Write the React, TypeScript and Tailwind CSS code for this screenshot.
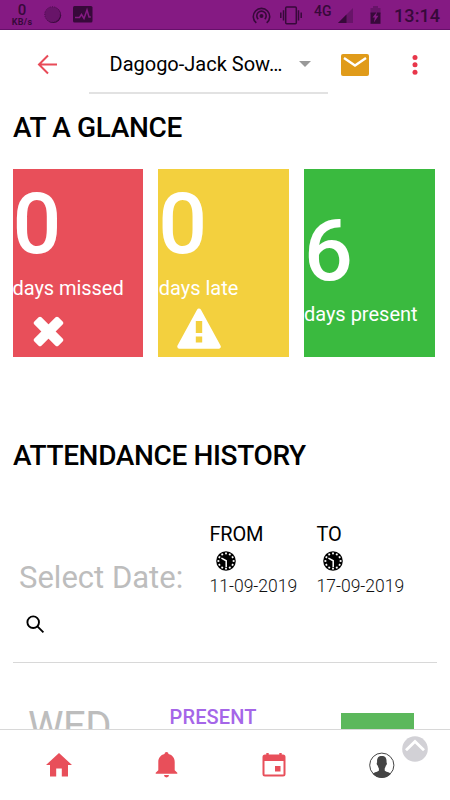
import React from "react";

const DIAL_HOURS = [0, 30, 60, 90, 120, 150, 180, 210, 240, 270, 300, 330];

function StatusBar() {
  return (
    <div className="flex h-[30px] shrink-0 items-center border-b border-[#66106a] bg-[#851a83] text-[#37093a]">
      <div className="ml-[11px] flex w-[22px] flex-col items-center">
        <span className="text-[15px] font-medium leading-[15px]">0</span>
        <span className="text-[9px] font-bold leading-[9px] tracking-[0.3px]">KB/s</span>
      </div>
      <svg className="ml-[11px]" width="18" height="18" viewBox="0 0 18 18">
        <circle cx="9.3" cy="9.3" r="7.8" fill="#37093a" />
        <circle cx="8.5" cy="8.5" r="7.8" fill="#681469" stroke="#4c0e4e" strokeWidth="1" strokeDasharray="1 1.4" />
      </svg>
      <svg className="ml-[11px]" width="20" height="17" viewBox="0 0 20 17">
        <rect width="19.5" height="16.5" rx="1.5" fill="#37093a" />
        <path d="M2 11.500h4.500l2-3 2.500 4L14 4l2 7h1.800" fill="none" stroke="#851a83" strokeWidth="1.5" />
      </svg>
      <svg className="ml-[159px] mt-[1px]" width="19" height="19" viewBox="0 0 19 19" fill="none" stroke="#37093a" strokeWidth="1.6">
        <path d="M4.3 16.9a8.2 8.2 0 1 1 10.4 0" />
        <path d="M6.2 13.2a4.700 4.700 0 1 1 6.600 0" />
        <circle cx="9.5" cy="10" r="1.2" fill="#37093a" />
      </svg>
      <svg className="ml-[9px] mt-[1px]" width="22" height="19" viewBox="0 0 22 19" fill="none" stroke="#37093a" strokeWidth="1.5">
        <rect x="5.7" y="1" width="10.6" height="16.8" rx="1" />
        <path d="M3.5 4.3v10.2M18.5 4.3v10.2M.8 6.500v5.500M21.200 6.500v5.500" />
      </svg>
      <span className="mb-[7px] ml-[12px] w-[18px] text-[14px] font-medium leading-[14px]">4G</span>
      <svg className="ml-[6px] mt-[3px]" width="16" height="16" viewBox="0 0 16 16">
        <path d="M0 15L15 0v15z" fill="#681469" />
        <path d="M0 15L8.5 6.500V15z" fill="#37093a" />
      </svg>
      <svg className="ml-[16px] mt-[1px]" width="11" height="19" viewBox="0 0 11 19">
        <path d="M3 0h5v2h2.500v6H.5V2H3z" fill="#681469" />
        <path d="M.5 6.500h10v11.300H.5z" fill="#37093a" />
        <path d="M7.300 5.500L2.500 11.500h2.400l-1.100 5 4.700-6.700H6z" fill="#851a83" />
      </svg>
      <span className="ml-[13px] mt-[2px] text-[18px] font-medium leading-[20px] tracking-[0.100px]">13:14</span>
    </div>
  );
}

function Header() {
  return (
    <header className="flex h-[64px] shrink-0">
      <svg className="ml-[37px] mt-[24px]" width="21" height="21" viewBox="0 0 21 21" fill="none" stroke="#e84b58" strokeWidth="2">
        <path d="M20 10.500H2M11 1.500L2 10.500l9 9" />
      </svg>
      <div className="ml-[31px] flex w-[239px] border-b-2 border-[#e2e2e2] pl-[20.5px] pt-[22px]">
        <span className="w-[178px] whitespace-nowrap text-[20px] leading-[25px] text-black">Dagogo-Jack Sow…</span>
        <svg className="ml-[11.500px] mt-[9px]" width="12" height="6" viewBox="0 0 12 6">
          <path d="M0 0h12L6 6z" fill="#999" />
        </svg>
      </div>
      <svg className="ml-[13px] mt-[24px]" width="28" height="22" viewBox="0 0 28 22">
        <rect width="28" height="22" rx="2" fill="#e09b1a" />
        <path d="M3 4l11 7.500 11-7.500" fill="none" stroke="#fff" strokeWidth="2.400" />
      </svg>
      <svg className="ml-[43px] mt-[24px]" width="6" height="22" viewBox="0 0 6 22" fill="#e8364a">
        <circle cx="3" cy="3.500" r="2.500" />
        <circle cx="3" cy="10.800" r="2.500" />
        <circle cx="3" cy="18.200" r="2.500" />
      </svg>
    </header>
  );
}

function ClockDial() {
  return (
    <svg className="ml-[6px]" width="20" height="20" viewBox="0 0 20 20">
      <circle cx="10" cy="10" r="9.800" fill="#000" />
      {DIAL_HOURS.map((a) => (
        <rect key={a} x="9.100" y="1.500" width="1.800" height="1.800" fill="#fff" transform={`rotate(${a} 10 10)`} />
      ))}
      <path d="M5.400 7.200L10.200 9.800v6.200" fill="none" stroke="#fff" strokeWidth="1.500" />
    </svg>
  );
}

function DateField({ label, value }: { label: string; value: string }) {
  return (
    <div className="flex w-[107px] flex-col">
      <span className="text-[20px] leading-[24px] tracking-[-0.200px] text-black">{label}</span>
      <div className="mt-[5px] h-[20px]">
        <ClockDial />
      </div>
      <span className="mt-[4px] text-[17.5px] font-light leading-[22px] text-[#111]">{value}</span>
    </div>
  );
}

function Glance() {
  return (
    <section className="ml-[12.500px] flex h-[187.500px] shrink-0 gap-[15px] text-white">
      <div className="flex w-[130.700px] flex-col bg-[#e84f5a]">
        <span className="mt-[10px] text-[86px] font-medium leading-[90px]">0</span>
        <span className="mt-[7px] text-[20px] leading-[24px] tracking-[-0.050px]">days missed</span>
        <svg className="ml-[20.500px] mt-[16px]" width="31" height="31" viewBox="0 0 31 31">
          <g fill="#fff" transform="rotate(45 15.500 15.500)">
            <rect x="-1.500" y="10.500" width="34" height="10" rx="2" />
            <rect x="10.500" y="-1.500" width="10" height="34" rx="2" />
          </g>
        </svg>
      </div>
      <div className="flex w-[130.700px] flex-col bg-[#f3d03e]">
        <span className="mt-[10px] text-[86px] font-medium leading-[90px]">0</span>
        <span className="ml-[0.500px] mt-[7px] text-[20px] leading-[24px]">days late</span>
        <svg className="ml-[19px] mt-[8px]" width="44" height="41" viewBox="0 0 44 41">
          <path d="M22 2.800L41.500 38.500h-39z" fill="#fff" stroke="#fff" strokeWidth="4.500" strokeLinejoin="round" />
          <path d="M18.800 13h6.400v12h-6.400zM18.800 28.500h6.400v6h-6.400z" fill="#f3d03e" />
        </svg>
      </div>
      <div className="flex w-[131px] flex-col bg-[#3aba3f]">
        <span className="mt-[37px] text-[86px] font-medium leading-[90px]">6</span>
        <span className="mt-[6px] text-[20px] leading-[24px]">days present</span>
      </div>
    </section>
  );
}

function BottomNav() {
  return (
    <nav className="relative flex h-[71px] shrink-0 border-t border-[#d8d8d8] bg-white">
      <svg className="ml-[46px] mt-[23px]" width="26" height="25" viewBox="0 0 26 25" fill="#e84f5a">
        <path d="M13 0L0 12H4v11.500h6.200v-8h5.600v8H22V12h4z" />
      </svg>
      <svg className="ml-[83px] mt-[22px]" width="23" height="27" viewBox="0 0 23 27" fill="#e84f5a">
        <path d="M11.500 0a2 2 0 0 1 2 2c4 1 6.200 4 6.200 8v8.200l2.600 2.600v1H.7v-1l2.600-2.600V10c0-4 2.200-7 6.200-8a2 2 0 0 1 2-2zM9 23h5a2.500 2.500 0 0 1-5 0z" />
      </svg>
      <svg className="ml-[84px] mt-[23px]" width="24" height="25" viewBox="0 0 24 25">
        <path d="M3 1.500h18a2.500 2.500 0 0 1 2.500 2.500v17A2.500 2.500 0 0 1 21 23.500H3a2.500 2.500 0 0 1-2.500-2.500v-17A2.500 2.500 0 0 1 3 1.500zM2.500 8V21.500h19V8zM13 13h5.500v5.500H13z" fill="#e84f5a" fillRule="evenodd" />
        <path d="M4.300 0h2.400v3H4.300zM17.300 0h2.400v3h-2.400z" fill="#e84f5a" />
      </svg>
      <svg className="ml-[83px] mt-[22px]" width="26" height="27" viewBox="0 0 26 27">
        <circle cx="12.800" cy="13.200" r="12.100" fill="#fff" stroke="#444" strokeWidth="1" />
        <path d="M12.800 4c3.800 0 5 2.300 4.700 6.500.8.500.3 2.300-.6 3-.4 1.500-.8 2.300-1.200 3v2.100c.8 1.400 4.400 1.600 6.300 3.200a12.100 12.100 0 0 1-18.400 0c1.900-1.600 5.500-1.800 6.300-3.200v-2.100c-.4-.7-.8-1.500-1.200-3-.9-.7-1.400-2.500-.6-3C7.800 6.300 9 4 12.800 4z" fill="#444" />
      </svg>
      <svg className="absolute left-[402px] top-[6px]" width="26" height="26" viewBox="0 0 26 26">
        <circle cx="13" cy="13" r="12.800" fill="#d2d1d6" />
        <path d="M4 14.300L13 5.500l9 8.800" fill="none" stroke="#fff" strokeWidth="2.800" />
      </svg>
    </nav>
  );
}

export default function App() {
  return (
    <div className="flex h-[800px] w-[450px] flex-col overflow-hidden bg-white font-['Roboto',sans-serif]">
      <StatusBar />
      <Header />
      <main className="flex h-[635px] shrink-0 flex-col overflow-hidden">
        <h1 className="mb-[25px] ml-[13px] mt-[18px] shrink-0 whitespace-nowrap text-[28px] font-medium leading-[32px] tracking-[-0.35px] text-black">AT A GLANCE</h1>
        <Glance />
        <h2 className="ml-[13px] mt-[83.500px] shrink-0 whitespace-nowrap text-[28px] font-medium leading-[32px] tracking-[-0.35px] text-black">ATTENDANCE HISTORY</h2>
        <section className="ml-[13px] mt-[50px] h-[141px] w-[424px] shrink-0 border-b border-[#d8d8d8]">
          <div className="flex">
            <span className="ml-[6px] mt-[36px] w-[190.500px] whitespace-nowrap text-[31px] leading-[40px] text-[#bdbdbd]">Select Date:</span>
            <DateField label="FROM" value="11-09-2019" />
            <DateField label="TO" value="17-09-2019" />
          </div>
          <svg className="ml-[13px] mt-[17px]" width="19" height="19" viewBox="0 0 19 19" fill="none" stroke="#000" strokeWidth="1.900">
            <circle cx="7.200" cy="7.200" r="5.800" />
            <path d="M11.400 11.400l6 6" />
          </svg>
        </section>
        <section className="flex h-[66px] shrink-0 overflow-hidden">
          <span className="ml-[28px] mt-[40px] w-[141.500px] text-[40px] leading-[48px] tracking-[-0.500px] text-[#bdbdbd]">WED</span>
          <span className="mt-[41.500px] w-[171px] text-[20px] font-medium leading-[24px] tracking-[0.150px] text-[#a566e8]">PRESENT</span>
          <div className="mt-[50px] h-[40px] w-[73px] bg-[#5cb85c]" />
        </section>
      </main>
      <BottomNav />
    </div>
  );
}
